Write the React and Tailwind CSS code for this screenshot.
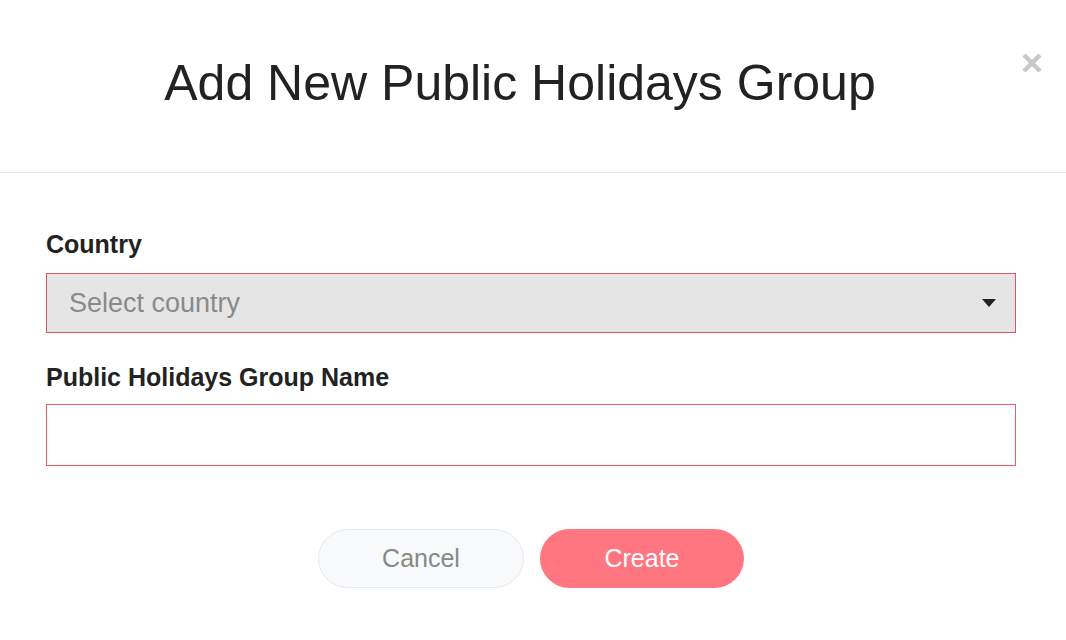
import React from "react";

const App = () => {
  return (
    <div className="w-[1066px] h-[640px] bg-white font-['Liberation_Sans',Arial,sans-serif] text-[#222]">
      <div className="relative h-[173px] border-b border-[#e6e6e6] flex items-center justify-center">
        <h1 className="text-[50px] leading-none text-[#222] -mt-[6px] -ml-[26px]">Add New Public Holidays Group</h1>
        <button className="absolute right-[23px] top-[52px] w-[22px] h-[22px] flex items-center justify-center">
          <svg width="22" height="22" viewBox="0 0 22 22">
            <path d="M3 3 L19 19 M19 3 L3 19" stroke="#c8c8c8" strokeWidth="4.5" />
          </svg>
        </button>
      </div>

      <div className="w-[970px] ml-[46px] pt-[59px]">
        <label className="block text-[25px] font-bold leading-none text-[#222] mb-[16px]">Country</label>
        <div className="flex items-center justify-between h-[60px] bg-[#e5e5e5] border border-[#e05565] pl-[22px] pr-[19px]">
          <span className="text-[27px] text-[#8a8a8a]">Select country</span>
          <svg width="14" height="8" viewBox="0 0 14 8">
            <path d="M0 0 L14 0 L7 8 Z" fill="#222" />
          </svg>
        </div>

        <label className="block text-[25px] font-bold leading-none text-[#222] mt-[32px] mb-[14px]">Public Holidays Group Name</label>
        <input className="block w-full h-[62px] border border-[#f05a6a] bg-white outline-none px-[22px] text-[25px]" />

        <div className="flex justify-center gap-[16px] mt-[63px]">
          <button className="w-[206px] h-[59px] rounded-full bg-[#f8f9fb] border border-[#e6e8ec] text-[25px] text-[#888]">Cancel</button>
          <button className="w-[204px] h-[59px] rounded-full bg-[#ff7680] text-[25px] text-white">Create</button>
        </div>
      </div>
    </div>
  );
};

export default App;
